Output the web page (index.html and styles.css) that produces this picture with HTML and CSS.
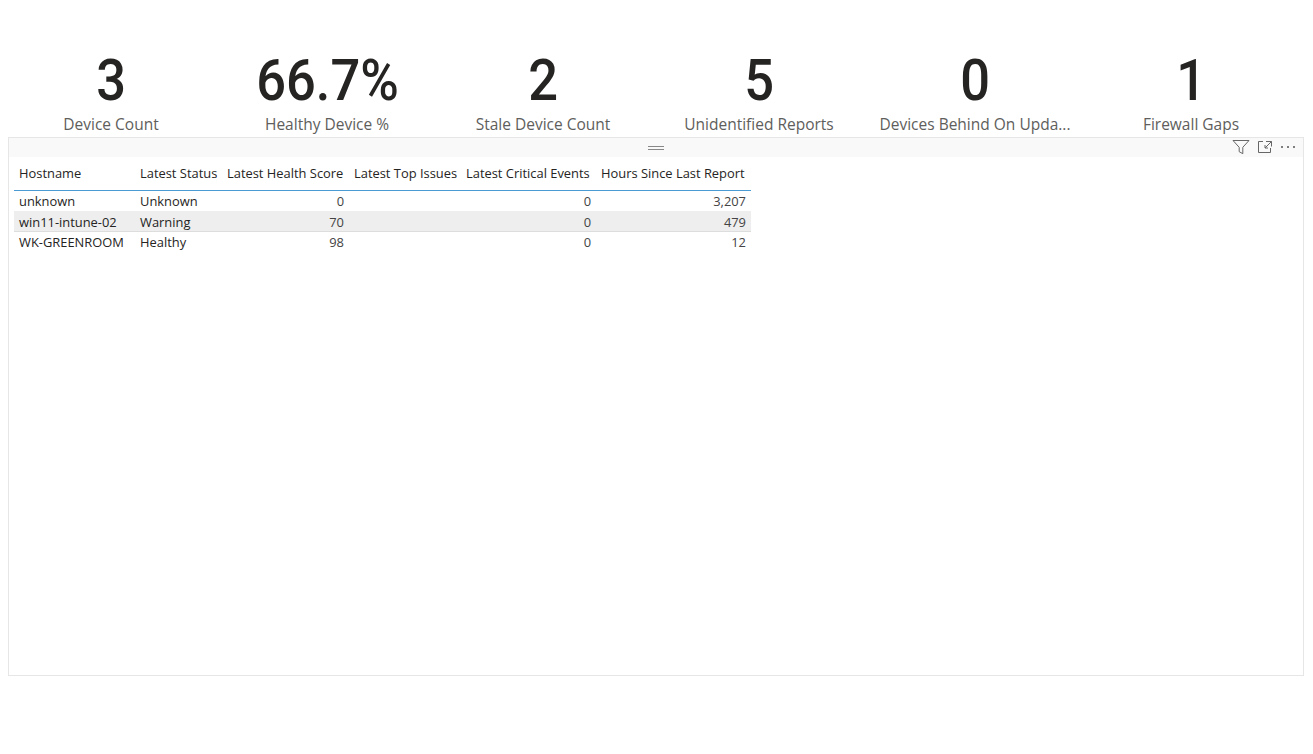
FILE: index.html
```html
<!DOCTYPE html>
<html lang="en">
<head>
	<meta charset="UTF-8">
	<title>Device Health Report</title>
	<link rel="stylesheet" href="styles.css">
</head>
<body>
	<div class="kpi-row">
		<div class="kpi"><span class="kpi-value">3</span><span class="kpi-label">Device Count</span></div>
		<div class="kpi"><span class="kpi-value">66.7%</span><span class="kpi-label">Healthy Device %</span></div>
		<div class="kpi"><span class="kpi-value">2</span><span class="kpi-label">Stale Device Count</span></div>
		<div class="kpi"><span class="kpi-value">5</span><span class="kpi-label">Unidentified Reports</span></div>
		<div class="kpi"><span class="kpi-value">0</span><span class="kpi-label">Devices Behind On Upda...</span></div>
		<div class="kpi"><span class="kpi-value">1</span><span class="kpi-label">Firewall Gaps</span></div>
	</div>
	<div class="panel">
		<div class="panel-head">
			<div class="grip"></div>
			<div class="panel-icons">
				<svg width="18" height="16" viewBox="0 0 18 16" fill="none" stroke="#666" stroke-width="1"><path d="M1 1.500h16l-6.200 6.800v6.400l-3.600-2V8.300z"/></svg>
				<svg width="16" height="14" viewBox="0 0 16 14" fill="none" stroke="#666" stroke-width="1"><path d="M6 1.500H1.500v11h12V8M9 1.500h5.500V6.500M14.500 1.500L8 8M8 5v3h3"/></svg>
				<svg width="16" height="14" viewBox="0 0 16 14" fill="#555"><circle cx="2" cy="7" r="1"/><circle cx="8" cy="7" r="1"/><circle cx="14" cy="7" r="1"/></svg>
			</div>
		</div>
		<table class="grid">
			<thead>
				<tr>
					<th class="col-host">Hostname</th>
					<th class="col-status">Latest Status</th>
					<th class="col-score">Latest Health Score</th>
					<th class="col-issues">Latest Top Issues</th>
					<th class="col-events">Latest Critical Events</th>
					<th class="col-hours">Hours Since Last Report</th>
				</tr>
			</thead>
			<tbody>
				<tr>
					<td>unknown</td><td>Unknown</td><td class="num">0</td><td></td><td class="num">0</td><td class="num">3,207</td>
				</tr>
				<tr class="alt">
					<td>win11-intune-02</td><td>Warning</td><td class="num">70</td><td></td><td class="num">0</td><td class="num">479</td>
				</tr>
				<tr>
					<td>WK-GREENROOM</td><td>Healthy</td><td class="num">98</td><td></td><td class="num">0</td><td class="num">12</td>
				</tr>
			</tbody>
		</table>
	</div>
</body>
</html>
```

FILE: styles.css
```css
body {
	margin: 0;
	background-color: #ffffff;
	font-family: "Open Sans", "Noto Sans", sans-serif;
	color: #252423;
}
.kpi-row {
	display: flex;
	padding: 47px 0 0 3px;
	height: 90px;
}
.kpi {
	display: flex;
	flex-direction: column;
	align-items: center;
	width: 216px;
}
.kpi-value {
	font-family: "Roboto", sans-serif;
	font-size: 57px;
	font-weight: 500;
	line-height: 68px;
	color: #252423;
	transform: scaleX(0.92);
}
.kpi-label {
	margin-top: -1px;
	font-size: 15.500px;
	line-height: 20px;
	color: #605e5c;
	white-space: nowrap;
}
.panel {
	box-sizing: border-box;
	margin-left: 8px;
	width: 1296px;
	height: 539px;
	border: 1px solid #e6e6e6;
}
.panel-head {
	display: flex;
	align-items: center;
	justify-content: center;
	position: relative;
	height: 19px;
	background-color: #f9f9f9;
}
.grip {
	width: 16px;
	height: 2px;
	border-top: 1px solid #888888;
	border-bottom: 1px solid #888888;
}
.panel-icons {
	position: absolute;
	right: 7px;
	top: 1px;
	display: flex;
	align-items: center;
	gap: 7px;
}
.grid {
	border-collapse: collapse;
	table-layout: fixed;
	width: 737px;
	margin-left: 5px;
	font-size: 12.900px;
}
.grid th {
	box-sizing: border-box;
	height: 33px;
	padding: 0 5px;
	font-weight: 400;
	text-align: left;
	white-space: nowrap;
	border-bottom: 1px solid #4a9bd4;
}
.grid td {
	height: 20px;
	padding: 0 5px;
	white-space: nowrap;
}
.col-host { width: 121px; }
.col-status { width: 87px; }
.col-score { width: 127px; }
.col-issues { width: 112px; }
.col-events { width: 135px; }
.col-hours { width: 155px; }
.grid .num {
	text-align: right;
	color: #444444;
}
.grid .alt td {
	box-sizing: border-box;
	padding-top: 2px;
	background-color: #eeeeee;
	border-bottom: 1px solid #dddddd;
}
```
